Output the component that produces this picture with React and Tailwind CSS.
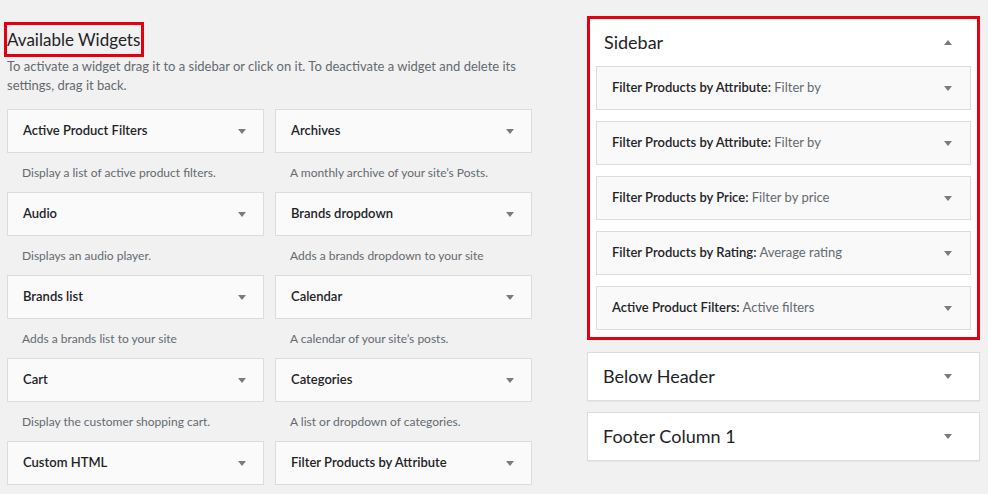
import React from "react";

const widgets = [
  ["Active Product Filters", "Display a list of active product filters."],
  ["Archives", "A monthly archive of your site’s Posts."],
  ["Audio", "Displays an audio player."],
  ["Brands dropdown", "Adds a brands dropdown to your site"],
  ["Brands list", "Adds a brands list to your site"],
  ["Calendar", "A calendar of your site’s posts."],
  ["Cart", "Display the customer shopping cart."],
  ["Categories", "A list or dropdown of categories."],
  ["Custom HTML", null],
  ["Filter Products by Attribute", null],
];

const sidebarWidgets = [
  ["Filter Products by Attribute:", "Filter by"],
  ["Filter Products by Attribute:", "Filter by"],
  ["Filter Products by Price:", "Filter by price"],
  ["Filter Products by Rating:", "Average rating"],
  ["Active Product Filters:", "Active filters"],
];

function Arrow({ up }) {
  return (
    <svg width="8" height="5" viewBox="0 0 8 5" className="shrink-0">
      <polygon points={up ? "0,5 8,5 4,0" : "0,0 8,0 4,5"} fill="#787c82" />
    </svg>
  );
}

export default function App() {
  return (
    <div
      className="w-[988px] h-[494px] bg-[#f1f1f1] overflow-hidden flex text-[#1d2327]"
      style={{ fontFamily: 'Lato, "Open Sans", sans-serif' }}
    >
      {/* Available widgets */}
      <div className="w-[525px] ml-[7px] pt-[22px] shrink-0">
        <h2 className="inline-block -ml-[3px] border-[3px] border-[#e3000f] text-[17px] leading-[29px] font-normal pr-[1px]">
          Available Widgets
        </h2>
        <p className="text-[13px] leading-[19px] text-[#646970]">
          To activate a widget drag it to a sidebar or click on it. To deactivate a widget and delete its
          <br />
          settings, drag it back.
        </p>

        <div className="grid grid-cols-2 gap-x-[11px] mt-[14px]">
          {widgets.map(([title, desc]) => (
            <div key={title}>
              <div className="h-[44px] border border-[#dcdcde] bg-[#fafafa] flex items-center justify-between pl-[15px] pr-[17px]">
                <span className="text-[13px] font-semibold">{title}</span>
                <Arrow />
              </div>
              {desc && (
                <div className="h-[39px] flex items-center pl-[15px] text-[12px] text-[#646970]">
                  {desc}
                </div>
              )}
            </div>
          ))}
        </div>
      </div>

      {/* Sidebars */}
      <div className="w-[393px] ml-[55px] pt-[16px] shrink-0">
        <div className="border-[3px] border-[#e3000f] bg-white">
          <div className="h-[47px] flex items-center justify-between pl-[14px] pr-[25px]">
            <h2 className="text-[18px] font-normal">Sidebar</h2>
            <Arrow up />
          </div>
          <div className="flex flex-col gap-[11px] px-[6px] pb-[7px]">
            {sidebarWidgets.map(([title, name], i) => (
              <div
                key={i}
                className="h-[44px] border border-[#dcdcde] bg-[#f9f9f9] flex items-center justify-between pl-[15px] pr-[18px] text-[13px]"
              >
                <span>
                  <span className="font-semibold">{title}</span>{" "}
                  <span className="text-[#646970]">{name}</span>
                </span>
                <Arrow />
              </div>
            ))}
          </div>
        </div>

        {["Below Header", "Footer Column 1"].map((name, i) => (
          <div
            key={name}
            className={`h-[49px] border border-[#dcdcde] bg-white flex items-center justify-between pl-[15px] pr-[27px] shadow-[0_1px_1px_rgba(0,0,0,0.04)] ${i === 0 ? "mt-[12px]" : "mt-[11px]"}`}
          >
            <h2 className="text-[18px] font-normal">{name}</h2>
            <Arrow />
          </div>
        ))}
      </div>
    </div>
  );
}
